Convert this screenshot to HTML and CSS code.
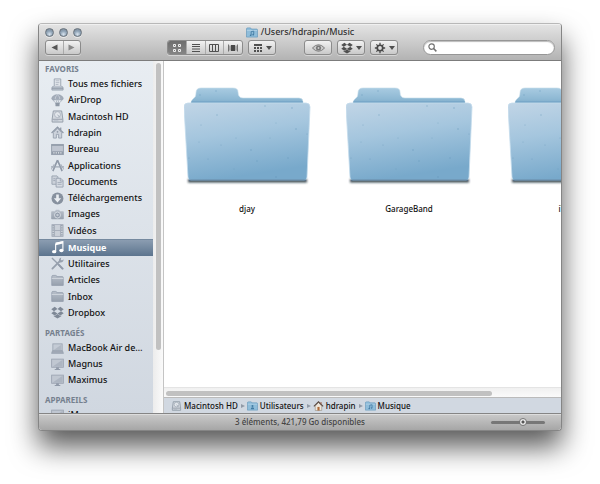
FILE: index.html
```html
<!DOCTYPE html>
<html lang="fr">
<head>
<meta charset="utf-8">
<title>/Users/hdrapin/Music</title>
<link rel="stylesheet" href="styles.css">
</head>
<body>
<svg class="defs" aria-hidden="true">
  <defs>
    <linearGradient id="g-front" x1="0" y1="0" x2=".25" y2="1"><stop offset="0" stop-color="#c1d5e6"/><stop offset=".45" stop-color="#a5c6de"/><stop offset="1" stop-color="#78a9cb"/></linearGradient>
    <linearGradient id="g-back" x1="0" y1="0" x2="0" y2="1"><stop offset="0" stop-color="#a9cbe1"/><stop offset=".5" stop-color="#8fb9d4"/><stop offset="1" stop-color="#6f9fc2"/></linearGradient>
    <linearGradient id="g-gray" x1="0" y1="0" x2="0" y2="1"><stop offset="0" stop-color="#b3bbc6"/><stop offset="1" stop-color="#8c96a4"/></linearGradient>
    <filter id="soft" x="-10%" y="-200%" width="120%" height="500%"><feGaussianBlur stdDeviation="1"/></filter>
    <symbol id="folder-large" viewBox="0 0 128 100">
      <rect x="4" y="92" width="119" height="3.500" fill="#1d2a35" opacity=".85" filter="url(#soft)"/>
      <path d="M7 22V16Q7 13 10 11Q12 10 12 6Q12 1 17 1H49Q54 1 54 5Q54 11 59 11H115Q119 11 119 15V22Z" fill="url(#g-back)" stroke="#c4dbea" stroke-width=".6"/>
      <path d="M7 15H119" stroke="#6d9fc2" stroke-width="1"/>
      <path d="M0 20Q0 16 4 16H122Q126 16 126 20L123 90Q123 93 120 93H7Q4 93 4 90Z" fill="url(#g-front)" stroke="#c4dcec" stroke-width=".8"/>
      <path d="M5 93H122" stroke="#4d7899" stroke-width="1.200"/>
      <g fill="#5d90b3" opacity=".5"><circle cx="33" cy="28" r=".7"/><circle cx="81" cy="19" r=".7"/><circle cx="108" cy="21" r=".8"/><circle cx="17" cy="38" r=".6"/><circle cx="92" cy="36" r=".5"/><circle cx="112" cy="42" r=".8"/><circle cx="123" cy="47" r=".6"/><circle cx="52" cy="51" r=".5"/><circle cx="37" cy="58" r=".6"/><circle cx="67" cy="63" r=".8"/><circle cx="73" cy="74" r=".7"/><circle cx="5" cy="71" r=".6"/><circle cx="24" cy="72" r=".6"/><circle cx="104" cy="71" r=".7"/><circle cx="92" cy="90" r=".8"/><circle cx="50" cy="82" r=".5"/><circle cx="16" cy="8" r=".7"/><circle cx="32" cy="4" r=".7"/><circle cx="86" cy="51" r=".5"/><circle cx="15" cy="55" r=".5"/></g>
    </symbol>
    <symbol id="allfiles" viewBox="0 0 14 14"><path d="M3.500 1h7v8h-7z" fill="#e3e7ec" stroke="#8d97a5"/><path d="M5 3h4M5 5h4M5 7h3" stroke="#9ba4b1" stroke-width=".8"/><path d="M2.500 8.500L1 10.500V13h12v-2.500L11.500 8.500" fill="#b5bdc8" stroke="#8d97a5"/><path d="M1 11h12" stroke="#7d8796"/></symbol>
    <symbol id="airdrop" viewBox="0 0 14 14"><path d="M.8 5.500C.8 2.500 3.500.7 7 .7s6.200 1.800 6.200 4.800L11 6.700 8.500 5.700 7 6.500 5.500 5.700 3 6.700Z" fill="#98a2b0" stroke="#7f8a99" stroke-width=".6"/><path d="M4.500 5.500Q4.500 2 7 1Q9.500 2 9.500 5.500" fill="none" stroke="#d5dae2" stroke-width=".7"/><path d="M1.500 6.200L5.500 10M12.500 6.200L8.500 10M5.500 6.500L6.500 10M8.500 6.500L7.500 10" stroke="#8d97a5" stroke-width=".7"/><rect x="4.800" y="9.300" width="4.400" height="4" rx=".7" fill="#7f8a99"/></symbol>
    <symbol id="drive" viewBox="0 0 14 14"><path d="M2.500 1h9l1.300 9v3H1.200v-3z" fill="#d0d5dc" stroke="#858f9c" stroke-width="1"/><circle cx="7" cy="5" r="3.200" fill="#e3e7ec" stroke="#98a1ae" stroke-width=".8"/><path d="M7 5L9.500 8" stroke="#8d97a5" stroke-width=".9"/><path d="M1.500 10h11" stroke="#7f8996" stroke-width=".9"/><path d="M3 11.700h5" stroke="#a2abb7" stroke-width=".8"/></symbol>
    <symbol id="home" viewBox="0 0 14 14"><path d="M2.500 7v6h3.300V9h2.400v4h3.300V7L7 2.500z" fill="#c9cfd8" stroke="#8690a0" stroke-width=".9"/><path d="M.6 7.500L7 1.200l6.400 6.300M10.500 1.500v3" fill="none" stroke="#808b9a" stroke-width="1.300"/><circle cx="7" cy="6.300" r=".9" fill="#808b9a"/></symbol>
    <symbol id="desktop" viewBox="0 0 14 14"><rect x=".7" y="1.500" width="12.600" height="11" fill="#b9c0cb" stroke="#808b9a" stroke-width=".9"/><path d="M.7 2.500h12.600" stroke="#7d8796"/><path d="M1.200 9h11.600v3H1.200z" fill="#7f8a99"/><path d="M2.500 10.600h9" stroke="#eef1f4" stroke-width="1.300" stroke-dasharray="1.300 1.200"/></symbol>
    <symbol id="apps" viewBox="0 0 14 14"><path d="M7 1.200L2 13M7 1.200L12 13" stroke="#818b9b" stroke-width="1.700" fill="none"/><path d="M0 8.500h14" stroke="#909aa8" stroke-width="1.300"/><path d="M0 11.500L3.500 5.500M14 11.500L10.500 5.500" stroke="#9aa3b0" stroke-width="1"/></symbol>
    <symbol id="docs" viewBox="0 0 14 14"><path d="M1 1h5.500l1 1v8H1z" fill="#c9cfd8" stroke="#8690a0" stroke-width=".9"/><path d="M5.500 3.500h5L13 6v7H5.500z" fill="#d5dae2" stroke="#8690a0" stroke-width=".9"/><path d="M10 3.500V6.500h3M7 8h4.500M7 10h4.500" stroke="#8690a0" stroke-width=".8" fill="none"/><path d="M2.500 4h2M2.500 6h2" stroke="#8690a0" stroke-width=".8"/></symbol>
    <symbol id="down" viewBox="0 0 14 14"><circle cx="7" cy="7" r="6.400" fill="#788392"/><path d="M5.600 2.700h2.800v4h2.600L7 11.300 3 6.700h2.600z" fill="#edf0f4"/></symbol>
    <symbol id="camera" viewBox="0 0 14 14"><path d="M1 3.500h3.200L5.300 2h3.400l1.100 1.500H13a.8.8 0 0 1 .8.8v7a.8.8 0 0 1-.8.800H1a.8.8 0 0 1-.8-.8v-7a.8.8 0 0 1 .8-.8z" fill="url(#g-gray)"/><circle cx="7" cy="7.600" r="3.200" fill="#8690a0" stroke="#e0e4ea" stroke-width=".9"/><circle cx="7" cy="7.600" r="1.300" fill="#c1c8d1"/></symbol>
    <symbol id="film" viewBox="0 0 14 14"><rect x="1" y=".7" width="12" height="12.600" fill="#c7cdd6" stroke="#9099a7" stroke-width=".8"/><path d="M2.300 1v12M11.700 1v12" stroke="#7f8a99" stroke-width="1.300" stroke-dasharray="1.300 1.200"/><path d="M3.800 1v12M10.200 1v12M4 7h6" stroke="#929ba9" stroke-width=".8"/></symbol>
    <symbol id="music" viewBox="0 0 14 14"><path d="M5 2.500L12.800.7V10.200" fill="none" stroke="#fff" stroke-width="1.200"/><path d="M5 2L12.800.3v2.500L5 4.500z" fill="#fff"/><path d="M5 3v8.500" stroke="#fff" stroke-width="1.200"/><ellipse cx="3.400" cy="11.500" rx="2.300" ry="1.800" fill="#fff"/><ellipse cx="11.200" cy="10.200" rx="2.300" ry="1.800" fill="#fff"/></symbol>
    <symbol id="tools" viewBox="0 0 14 14"><path d="M1 1l5 5 6.500 7" stroke="#8b95a3" stroke-width="1.500" fill="none"/><path d="M8.500 8.500l4 4" stroke="#8690a0" stroke-width="2.200" stroke-linecap="round"/><path d="M1.500 12.500l8.500-8.500" stroke="#8b95a3" stroke-width="2" stroke-linecap="round"/><path d="M9 5.800Q7.500 2 11 .6L10.500 3l1.300.9L13.500 2.500Q13.800 6.500 9 5.800z" fill="#8b95a3"/></symbol>
    <symbol id="folder" viewBox="0 0 14 14"><path d="M.8 12.300V3Q.8 1.500 2 1.500h3.300q.7 0 .9 1.300H12.200q1 0 1 1v8.500z" fill="url(#g-gray)" stroke="#8690a0" stroke-width=".8"/><path d="M.8 4.800h12.400" stroke="#d5dae2" stroke-width=".9"/></symbol>
    <symbol id="dropbox" viewBox="0 0 14 14"><path d="M4 .8L7 3.200 3.200 5.600.3 3.400zM10 .8L7 3.200l3.800 2.400 2.900-2.200zM.3 7.900L3.200 5.600 7 8 4 10.200zM13.700 7.900L10.800 5.600 7 8l3 2.200zM7 8.600l3 2.200 1.100-.7v1L7 13.500 2.900 11.100v-1l1.100.7z"/></symbol>
    <symbol id="laptop" viewBox="0 0 14 14"><rect x="2" y="2" width="10" height="7.500" fill="#c2c9d3" stroke="#8f98a6" stroke-width=".9"/><path d="M3 8.500L11 3v5.500z" fill="#aab2be"/><path d="M1.500 9.500h11l1 2.800H.5z" fill="#9aa3b0" stroke="#8690a0" stroke-width=".6"/></symbol>
    <symbol id="screen" viewBox="0 0 14 14"><rect x=".7" y="1.200" width="12.600" height="8.800" fill="#bdc4cf" stroke="#8f98a6" stroke-width=".9"/><path d="M1.500 9.300L12.500 2v7.300z" fill="#a7afbc"/><path d="M5.500 10h3v1.800h1.500v1.200H4v-1.200h1.500z" fill="#8690a0"/></symbol>
    <symbol id="blue-folder" viewBox="0 0 14 12"><path d="M.6 11.400V2Q.6.6 1.800.6h3.500L6.200 2h6.200q1 0 1 1v8.400z" fill="#8fbdda" stroke="#6597ba" stroke-width=".8"/><path d="M1 3.700h12" stroke="#b9d7e9" stroke-width=".8"/></symbol>
    <symbol id="blue-music" viewBox="0 0 14 12"><use href="#blue-folder"/><path d="M6 9V5l3-.6V8.300" fill="none" stroke="#427ba3" stroke-width="1"/><circle cx="5.400" cy="9.200" r="1" fill="#427ba3"/><circle cx="8.400" cy="8.500" r="1" fill="#427ba3"/></symbol>
    <symbol id="blue-users" viewBox="0 0 14 12"><use href="#blue-folder"/><circle cx="7" cy="6" r="1.300" fill="#427ba3"/><path d="M4.800 10Q4.800 7.500 7 7.500T9.200 10z" fill="#427ba3"/></symbol>
    <symbol id="color-home" viewBox="0 0 14 14"><path d="M2.500 7v6.300h9V7L7 2z" fill="#eee6da" stroke="#8b8075" stroke-width=".7"/><path d="M.5 7.500L7 1.200l6.500 6.300" fill="none" stroke="#5a4a42" stroke-width="1.600"/><path d="M5.500 8.300h3v5h-3z" fill="#b06a38"/><path d="M10.500 1.500v3" stroke="#9a5b42" stroke-width="1.400"/></symbol>
  </defs>
</svg>

<main class="window">
  <header class="titlebar">
    <div class="title-row">
      <div class="lights">
        <button type="button" class="light" aria-label="Fermer"></button>
        <button type="button" class="light" aria-label="Réduire"></button>
        <button type="button" class="light" aria-label="Agrandir"></button>
      </div>
      <h1 class="title"><svg class="title-icon"><use href="#blue-music"/></svg>/Users/hdrapin/Music</h1>
    </div>
    <div class="toolbar">
      <div class="segment nav">
        <button type="button" aria-label="Précédent"><svg viewBox="0 0 7 7"><path d="M.5 3.500L6.500.500v6z" fill="#555"/></svg></button>
        <button type="button" aria-label="Suivant"><svg viewBox="0 0 7 7"><path d="M6.500 3.500L.5.500v6z" fill="#888"/></svg></button>
      </div>
      <div class="segment views">
        <button type="button" class="on" aria-label="Icônes"><svg class="wide" viewBox="0 0 10 8"><path d="M1.500.5h2v2h-2zM6.500.500h2v2h-2zM1.500 5.500h2v2h-2zM6.500 5.500h2v2h-2z" fill="none" stroke="#eee"/></svg></button>
        <button type="button" aria-label="Liste"><svg class="wide" viewBox="0 0 10 8"><path d="M1 .5h8M1 2.500h8M1 5h8M1 7.500h8" stroke="#505050"/></svg></button>
        <button type="button" aria-label="Colonnes"><svg class="wide" viewBox="0 0 10 8"><path d="M.5.500h9v7h-9zM3.500.500v7M6.500.500v7" fill="none" stroke="#505050"/></svg></button>
        <button type="button" aria-label="Cover Flow"><svg class="wide" viewBox="0 0 10 8"><path d="M3 1h4v6H3z" fill="#484848"/><path d="M.5.500v7M2 1.500v5M8 1.500v5M9.500.500v7" stroke="#555" stroke-width=".8"/></svg></button>
      </div>
      <button type="button" class="tool arrange" aria-label="Organiser"><svg class="wide" viewBox="0 0 10 8"><path d="M1 1h8" stroke="#505050" stroke-width="2"/><path d="M1 4h8M1 7h8" stroke="#505050" stroke-width="2" stroke-dasharray="2 1"/></svg><span class="caret"></span></button>
      <button type="button" class="tool look" aria-label="Coup d’œil"><svg class="eye" viewBox="0 0 14 8"><path d="M.5 4Q3.500.500 7 .5T13.500 4Q10.500 7.500 7 7.500T.5 4z" fill="#c9c9c9" stroke="#777"/><circle cx="7" cy="4" r="2.700" fill="#777"/><circle cx="7" cy="4" r="1" fill="#ccc"/></svg></button>
      <button type="button" class="tool" aria-label="Dropbox"><svg class="glyph" fill="#505050"><use href="#dropbox"/></svg><span class="caret"></span></button>
      <button type="button" class="tool" aria-label="Actions"><svg class="glyph" viewBox="0 0 14 14"><circle cx="7" cy="7" r="3.200" fill="none" stroke="#484848" stroke-width="2"/><path d="M7 1v2.500M7 10.500V13M1 7h2.500M10.500 7H13M2.800 2.800l1.700 1.700M9.500 9.500l1.700 1.700M11.200 2.800L9.500 4.500M4.500 9.500L2.800 11.200" stroke="#484848" stroke-width="1.500"/></svg><span class="caret"></span></button>
      <label class="search">
        <svg viewBox="0 0 10 10"><circle cx="4" cy="4" r="3" fill="none" stroke="#707070" stroke-width="1.300"/><path d="M6.200 6.200L9.300 9.300" stroke="#707070" stroke-width="1.700"/></svg>
        <input type="search" aria-label="Rechercher">
      </label>
    </div>
  </header>

  <div class="body">
    <nav class="sidebar" aria-label="Barre latérale">
      <div class="sources">
        <h2 class="heading first">FAVORIS</h2>
        <ul class="list favorites">
          <li><a href="#"><svg><use href="#allfiles"/></svg>Tous mes fichiers</a></li>
          <li><a href="#"><svg><use href="#airdrop"/></svg>AirDrop</a></li>
          <li><a href="#"><svg><use href="#drive"/></svg>Macintosh HD</a></li>
          <li><a href="#"><svg><use href="#home"/></svg>hdrapin</a></li>
          <li><a href="#"><svg><use href="#desktop"/></svg>Bureau</a></li>
          <li><a href="#"><svg><use href="#apps"/></svg>Applications</a></li>
          <li><a href="#"><svg><use href="#docs"/></svg>Documents</a></li>
          <li><a href="#"><svg><use href="#down"/></svg>Téléchargements</a></li>
          <li><a href="#"><svg><use href="#camera"/></svg>Images</a></li>
          <li><a href="#"><svg><use href="#film"/></svg>Vidéos</a></li>
          <li><a href="#" class="selected" aria-current="page"><svg><use href="#music"/></svg>Musique</a></li>
          <li><a href="#"><svg><use href="#tools"/></svg>Utilitaires</a></li>
          <li><a href="#"><svg><use href="#folder"/></svg>Articles</a></li>
          <li><a href="#"><svg><use href="#folder"/></svg>Inbox</a></li>
          <li><a href="#"><svg fill="#6f7a89"><use href="#dropbox"/></svg>Dropbox</a></li>
        </ul>
        <h2 class="heading">PARTAGÉS</h2>
        <ul class="list">
          <li><a href="#"><svg><use href="#laptop"/></svg>MacBook Air de…</a></li>
          <li><a href="#"><svg><use href="#screen"/></svg>Magnus</a></li>
          <li><a href="#"><svg><use href="#screen"/></svg>Maximus</a></li>
        </ul>
        <h2 class="heading">APPAREILS</h2>
        <ul class="list">
          <li><a href="#"><svg><use href="#screen"/></svg>iMac</a></li>
        </ul>
      </div>
      <div class="vscroll"><div class="vthumb"></div></div>
    </nav>

    <section class="content">
      <div class="files">
        <figure class="file"><svg><use href="#folder-large"/></svg><figcaption>djay</figcaption></figure>
        <figure class="file"><svg><use href="#folder-large"/></svg><figcaption>GarageBand</figcaption></figure>
        <figure class="file"><svg><use href="#folder-large"/></svg><figcaption>iTunes</figcaption></figure>
      </div>
      <div class="hscroll"><div class="hthumb"></div></div>
      <ol class="path">
        <li><svg><use href="#drive"/></svg>Macintosh HD</li>
        <li><svg><use href="#blue-users"/></svg>Utilisateurs</li>
        <li><svg><use href="#color-home"/></svg>hdrapin</li>
        <li><svg><use href="#blue-music"/></svg>Musique</li>
      </ol>
    </section>
  </div>

  <footer class="status">
    <span class="summary">3 éléments, 421,79 Go disponibles</span>
    <input class="zoom" type="range" min="0" max="100" value="60" aria-label="Taille des icônes">
  </footer>
</main>
</body>
</html>
```

FILE: styles.css
```css
* {
  box-sizing: border-box;
}

body {
  margin: 0;
  background: #fff;
  color: #111;
  font: 500 9px/16px "Noto Sans", "Open Sans", sans-serif;
}

ul,
ol {
  margin: 0;
  padding: 0;
  list-style: none;
}

button {
  margin: 0;
  padding: 0;
  border: 0;
  background: none;
}

svg {
  display: block;
  flex: none;
}

.defs {
  position: absolute;
  width: 0;
  height: 0;
}

.window {
  display: flex;
  flex-direction: column;
  height: calc(100vh - 76px);
  margin: 23px 38px 53px;
  border: 1px solid #858585;
  border-top-color: #b8b8b8;
  border-radius: 4px;
  overflow: hidden;
  background: #fff;
  box-shadow: 0 16px 28px rgba(0, 0, 0, 0.65);
}

/* Title bar and toolbar */
.titlebar {
  flex: none;
  height: 37px;
  padding: 0 6px;
  border-bottom: 1px solid #7c7c7c;
  background: linear-gradient(#e4e4e4, #b3b3b3);
  box-shadow: inset 0 1px #f0f0f0;
}

.title-row {
  display: grid;
  grid-template-columns: 1fr auto 1fr;
  align-items: center;
  height: 16px;
}

.lights {
  display: flex;
  gap: 5px;
}

.light {
  width: 9px;
  height: 9px;
  border: 1px solid #68727c;
  border-radius: 50%;
  background: radial-gradient(circle at 50% 75%, #d9e4ee, #8fa3b6 50%, #7b8894);
  box-shadow: 0 1px rgba(255, 255, 255, 0.5);
}

.title {
  display: flex;
  align-items: center;
  gap: 3px;
  margin: 0;
  color: #333;
  font-size: 9px;
  font-weight: 500;
}

.title-icon {
  width: 12px;
  height: 11px;
}

.toolbar {
  display: flex;
  height: 15px;
}

.segment,
.tool {
  display: flex;
  border: 1px solid #8b8b8b;
  border-radius: 3px;
  background: linear-gradient(#f2f2f2, #c9c9c9);
  box-shadow: 0 1px rgba(255, 255, 255, 0.4);
}

.segment {
  overflow: hidden;
}

.segment button {
  display: flex;
  flex: 1;
  align-items: center;
  justify-content: center;
}

.segment button + button {
  border-left: 1px solid #aaa;
}

.segment .on {
  background: linear-gradient(#6e6e6e, #858585);
}

.segment svg {
  width: 7px;
  height: 7px;
}

.segment .wide,
.tool .wide {
  width: 10px;
  height: 8px;
}

.nav {
  width: 36px;
  margin-right: 86px;
}

.views {
  width: 76px;
  margin-right: 5px;
}

.tool {
  align-items: center;
  justify-content: center;
  gap: 3px;
  width: 28px;
  margin-right: 5px;
}

.arrange {
  margin-right: 28px;
}

.eye {
  width: 13px;
  height: 8px;
}

.glyph {
  width: 12px;
  height: 12px;
}

.caret {
  border: 3px solid transparent;
  border-top: 4px solid #505050;
  border-bottom: 0;
}

.search {
  display: flex;
  align-items: center;
  gap: 3px;
  width: 132px;
  margin-left: auto;
  padding: 0 4px;
  border: 1px solid #969696;
  border-radius: 8px;
  background: #fff;
  box-shadow: inset 0 1px 1px #bbb;
}

.search svg {
  width: 9px;
  height: 9px;
}

.search input {
  flex: 1;
  min-width: 0;
  height: 11px;
  padding: 0;
  border: 0;
  outline: 0;
  background: none;
  font: inherit;
}

/* Sidebar */
.body {
  display: flex;
  flex: 1;
  min-height: 0;
}

.sidebar {
  display: flex;
  flex: none;
  width: 125px;
  border-right: 1px solid #c4c4c4;
}

.sources {
  flex: 1;
  overflow: hidden;
  background: linear-gradient(#e8edf2, #d0d7e0);
}

.heading {
  height: 19px;
  margin: 0;
  padding: 4px 6px 0;
  color: #75808e;
  font-size: 8px;
  font-weight: 700;
}

.first {
  height: 15px;
  padding-top: 0;
}

.list {
  display: grid;
  grid-auto-rows: 16px;
}

/* The long group spreads its rows a little wider than the short ones. */
.favorites {
  grid-auto-rows: 1fr;
  height: 245px;
}

.list a {
  display: flex;
  align-items: center;
  gap: 4px;
  height: 100%;
  padding-left: 12px;
  color: inherit;
  text-decoration: none;
  white-space: nowrap;
}

.list svg {
  width: 13px;
  height: 13px;
  opacity: 0.85;
}

.list .selected {
  border-top: 1px solid #75899f;
  background: linear-gradient(#8b9db1, #5c748e);
  color: #fff;
  font-weight: 700;
}

.selected svg {
  opacity: 1;
}

.vscroll {
  width: 10px;
  padding: 2px 2px 0 3px;
  background: linear-gradient(90deg, #ececec, #fafafa);
}

.vthumb {
  height: 82%;
  border-radius: 3px;
  background: #c1c1c1;
}

/* Files */
.content {
  display: flex;
  flex: 1;
  flex-direction: column;
  min-width: 0;
}

.files {
  display: flex;
  flex: 1;
  overflow: hidden;
  padding: 26px 0 0 2px;
}

.file {
  flex: none;
  width: 162px;
  margin: 0;
  font-size: 8px;
  text-align: center;
}

.file svg {
  width: 128px;
  height: 100px;
  margin: 0 16px 14px 18px;
  overflow: visible;
}

.hscroll {
  flex: none;
  height: 10px;
  padding: 3px 2px 2px;
  border-top: 1px solid #e4e4e4;
  background: linear-gradient(#f0f0f0, #fafafa);
}

.hthumb {
  width: 83%;
  height: 5px;
  border-radius: 3px;
  background: #c1c1c1;
}

.path {
  display: flex;
  flex: none;
  height: 16px;
  padding-left: 7px;
  border-top: 1px solid #bbb;
  background: #d1d8e1;
  font-size: 8px;
}

.path li {
  display: flex;
  align-items: center;
  gap: 2px;
}

.path li + li::before {
  margin: 0 0 0 3px;
  border: 2px solid transparent;
  border-left: 4px solid #919aa6;
  border-right: 0;
  content: "";
}

.path svg {
  width: 11px;
  height: 10px;
}

/* Status bar */
.status {
  display: grid;
  flex: none;
  grid-template-columns: 1fr auto 1fr;
  align-items: center;
  height: 17px;
  border-top: 1px solid #858585;
  background: linear-gradient(#cacaca, #a6a6a6);
  box-shadow: inset 0 1px #ddd;
}

.summary {
  grid-column: 2;
  color: #444;
  font-size: 8px;
}

.zoom {
  justify-self: end;
  width: 54px;
  height: 9px;
  margin: 0 16px 0 0;
  background: none;
  appearance: none;
}

.zoom::-webkit-slider-runnable-track {
  height: 3px;
  border-radius: 2px;
  background: #777;
}

.zoom::-webkit-slider-thumb {
  width: 8px;
  height: 8px;
  margin-top: -3px;
  border: 1px solid #777;
  border-radius: 50%;
  background: radial-gradient(circle, #555 1px, #eee 2px);
  appearance: none;
}
```
